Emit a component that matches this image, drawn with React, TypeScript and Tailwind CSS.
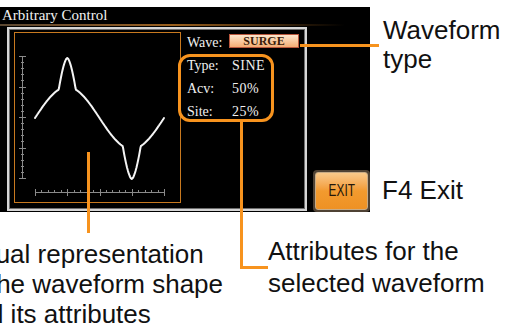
import React from "react";

function wavePath() {
  const pts: string[] = [];
  for (let x = 36; x <= 165; x += 0.5) {
    const t = ((x - 36) / 129) * Math.PI * 2;
    let y = 119 - 31 * Math.sin(t);
    const dPeak = Math.abs(x - 68.25);
    const dTrough = Math.abs(x - 132.75);
    if (dPeak < 8.5) y -= 29 * (1 - Math.pow(dPeak / 8.5, 1.6));
    if (dTrough < 9) y += 30 * (1 - Math.pow(dTrough / 9, 1.6));
    pts.push(`${x.toFixed(1)},${y.toFixed(1)}`);
  }
  return "M" + pts.join(" L");
}

function WavePlot() {
  const vTicks = Array.from({ length: 21 }, (_, i) => i);
  const hTicks = Array.from({ length: 21 }, (_, i) => i);
  return (
    <svg viewBox="16 34 165 169" className="block h-full w-full">
      <g stroke="#8a8a8a" strokeWidth={1}>
        <line x1={23.5} y1={57} x2={23.5} y2={179} />
        {vTicks.map((i) => {
          const y = Math.round(57 + i * 6.1) + 0.5;
          const major = i % 5 === 0;
          return <line key={`v${i}`} x1={major ? 20 : 22} x2={major ? 27 : 25} y1={y} y2={y} />;
        })}
        <line x1={36} y1={193.5} x2={165} y2={193.5} />
        {hTicks.map((i) => {
          const x = Math.round(36 + i * 6.45) + 0.5;
          const major = i % 5 === 0;
          return <line key={`h${i}`} x1={x} x2={x} y1={major ? 190 : 191} y2={major ? 197 : 194} />;
        })}
      </g>
      <path d={wavePath()} fill="none" stroke="#f4f4f4" strokeWidth={2} strokeLinejoin="round" strokeLinecap="round" />
    </svg>
  );
}

function InfoRow({ label, value }: { label: string; value: string }) {
  return (
    <div className="flex h-[23px] text-[14px] leading-[23px] text-[#f0f0f0]">
      <span className="w-[45px]">{label}</span>
      <span className="tracking-[0.5px]">{value}</span>
    </div>
  );
}

function Screen() {
  return (
    <div className="flex h-[205px] w-[370px] flex-col bg-black font-['Liberation_Serif',serif]">
      <div className="flex h-[20px] flex-col">
        <div className="h-[17px] pl-[2px] text-[15px] leading-[16px] text-[#f2f2f2]">Arbitrary Control</div>
        <div className="h-[2px] w-[345px] bg-gradient-to-r from-[#5a4630] via-[#9a5f1c] to-transparent" />
      </div>
      <div className="flex flex-1">
        <div className="ml-[7px] flex h-[184px] w-[300px] border-2 border-[#d6d6d6] pl-[5px] pt-[3px] shadow-[inset_0_0_0_1px_#6e6e6e]">
          <div className="h-[171px] w-[167px] border border-[#c8791f]">
            <WavePlot />
          </div>
          <div className="ml-[6px] flex flex-col">
            <div className="mt-[2px] flex h-[14px] text-[14px] text-[#f0f0f0]">
              <span className="w-[42px] pt-[2px] leading-[14px]">Wave:</span>
              <div className="flex h-[14px] w-[70px] items-center justify-center border border-[#b9573d] bg-gradient-to-b from-[#fde6cc] to-[#f3ad74] text-[12px] font-bold leading-[12px] text-[#3a1c08]">
                SURGE
              </div>
            </div>
            <div className="mt-[6px] flex flex-col">
              <InfoRow label="Type:" value="SINE" />
              <InfoRow label="Acv:" value="50%" />
              <InfoRow label="Site:" value="25%" />
            </div>
          </div>
        </div>
        <div className="ml-[6px] mt-auto h-[42px] w-[57px] rounded-[4px] bg-[#4f4234] p-[2px]">
          <div className="flex h-full w-full items-center justify-center rounded-[3px] border border-[#c7ab86] bg-gradient-to-b from-[#f9c98a] via-[#f29a2e] to-[#ee9124]">
            <span className="inline-block scale-x-[0.74] font-['Liberation_Sans',sans-serif] text-[16px] leading-[16px] text-[#24170b]">EXIT</span>
          </div>
        </div>
      </div>
    </div>
  );
}

export default function App() {
  return (
    <div className="relative h-[328px] w-[506px] overflow-hidden bg-white font-['Liberation_Sans',Arial,sans-serif] text-[#111]">
      <div className="flex pt-[7px]">
        <Screen />
        <div className="ml-[13px] flex flex-col whitespace-nowrap text-[26px] leading-[29px]">
          <div className="mt-[9px]">
            Waveform
            <br />
            type
          </div>
          <div className="-ml-px mt-[102px]">F4 Exit</div>
        </div>
      </div>
      <div className="flex whitespace-nowrap text-[26px]">
        <div className="-ml-[40px] mt-[27px] w-[308px] leading-[30px]">
          Visual representation
          <br />
          of the waveform shape
          <br />
          and its attributes
        </div>
        <div className="mt-[23px] leading-[32px]">
          Attributes for the
          <br />
          selected waveform
        </div>
      </div>

      {/* callouts */}
      <div className="absolute left-[178px] top-[54px] h-[68px] w-[96px] rounded-[12px] border-[3px] border-[#f7931e]" />
      <div className="absolute left-[300px] top-[44px] h-[3px] w-[79px] bg-[#f7931e]" />
      <div className="absolute left-[87px] top-[152px] h-[81px] w-[3px] bg-[#f7931e]" />
      <div className="absolute left-[240px] top-[122px] h-[147px] w-[3px] bg-[#f7931e]" />
      <div className="absolute left-[240px] top-[266px] h-[3px] w-[28px] bg-[#f7931e]" />
    </div>
  );
}
